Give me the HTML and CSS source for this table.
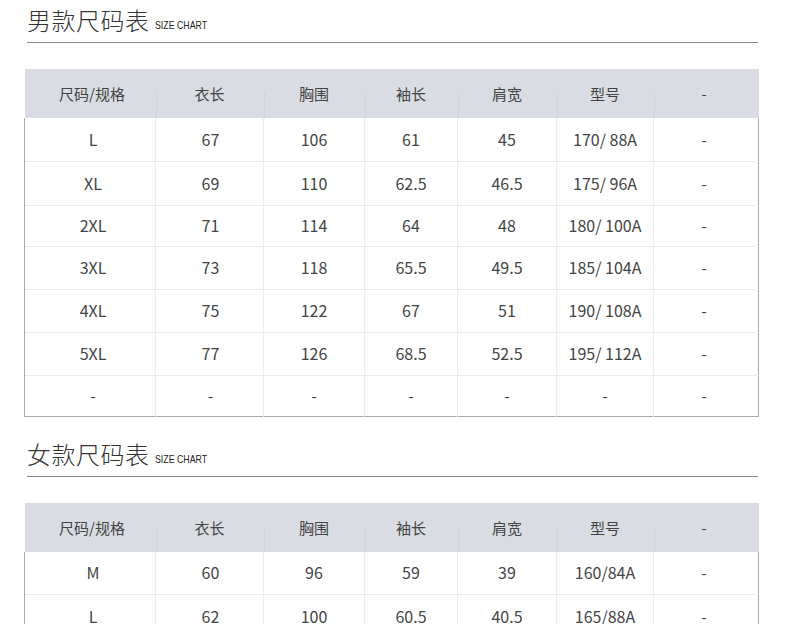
FILE: index.html
```html
<!DOCTYPE html>
<html lang="zh">
<head>
<meta charset="utf-8">
<title>尺码表</title>
<link rel="stylesheet" href="styles.css">
</head>
<body>
<section class="chart">
  <h2 class="chart-title"><span class="cn">男款尺码表</span><span class="en">SIZE CHART</span></h2>
  <table class="size-table">
    <thead>
      <tr><th>尺码/规格</th><th>衣长</th><th>胸围</th><th>袖长</th><th>肩宽</th><th>型号</th><th>-</th></tr>
    </thead>
    <tbody>
      <tr><td>L</td><td>67</td><td>106</td><td>61</td><td>45</td><td>170/ 88A</td><td>-</td></tr>
      <tr><td>XL</td><td>69</td><td>110</td><td>62.5</td><td>46.5</td><td>175/ 96A</td><td>-</td></tr>
      <tr><td>2XL</td><td>71</td><td>114</td><td>64</td><td>48</td><td>180/ 100A</td><td>-</td></tr>
      <tr><td>3XL</td><td>73</td><td>118</td><td>65.5</td><td>49.5</td><td>185/ 104A</td><td>-</td></tr>
      <tr><td>4XL</td><td>75</td><td>122</td><td>67</td><td>51</td><td>190/ 108A</td><td>-</td></tr>
      <tr><td>5XL</td><td>77</td><td>126</td><td>68.5</td><td>52.5</td><td>195/ 112A</td><td>-</td></tr>
      <tr><td>-</td><td>-</td><td>-</td><td>-</td><td>-</td><td>-</td><td>-</td></tr>
    </tbody>
  </table>
</section>
<section class="chart chart-second">
  <h2 class="chart-title"><span class="cn">女款尺码表</span><span class="en">SIZE CHART</span></h2>
  <table class="size-table">
    <thead>
      <tr><th>尺码/规格</th><th>衣长</th><th>胸围</th><th>袖长</th><th>肩宽</th><th>型号</th><th>-</th></tr>
    </thead>
    <tbody>
      <tr><td>M</td><td>60</td><td>96</td><td>59</td><td>39</td><td>160/84A</td><td>-</td></tr>
      <tr><td>L</td><td>62</td><td>100</td><td>60.5</td><td>40.5</td><td>165/88A</td><td>-</td></tr>
    </tbody>
  </table>
</section>
</body>
</html>
```
FILE: styles.css
```css
html, body {
  margin: 0;
  padding: 0;
  background: #fff;
}
body {
  font-family: "Noto Sans CJK SC", "Noto Sans", sans-serif;
  color: #333;
  width: 790px;
  height: 624px;
  overflow: hidden;
}
.chart {
  padding: 0 32px 0 24px;
}
.chart-second {
  margin-top: 17px;
}
.chart-title {
  margin: 0 0 0 3px;
  height: 43px;
  border-bottom: 1px solid #8a8a8a;
  display: flex;
  align-items: flex-end;
  font-weight: normal;
  box-sizing: border-box;
  padding-bottom: 7px;
}
.chart-title .cn {
  font-size: 24px;
  font-weight: 300;
  line-height: 30px;
  color: #333;
  letter-spacing: 0.5px;
}
.chart-title .en {
  font-family: "Liberation Sans", Arial, sans-serif;
  font-size: 11px;
  line-height: 12px;
  color: #222;
  margin-left: 5px;
  margin-bottom: 4px;
  display: inline-block;
  transform: scaleX(0.8);
  transform-origin: left bottom;
  white-space: nowrap;
}
.size-table {
  margin-top: 26px;
  width: 734px;
  border-collapse: collapse;
  table-layout: fixed;
  font-size: 15px;
  font-weight: 400;
  color: #444;
}
.size-table th:nth-child(1) { width: 131px; }
.size-table th:nth-child(2) { width: 108px; }
.size-table th:nth-child(3) { width: 101px; }
.size-table th:nth-child(4) { width: 93px; }
.size-table th:nth-child(5) { width: 99px; }
.size-table th:nth-child(6) { width: 97px; }
.size-table th:nth-child(7) { width: 105px; }
.size-table thead tr {
  background: #d9dde3;
  height: 49px;
}
.size-table th {
  font-weight: 400;
  color: #444;
  text-align: center;
  position: relative;
  padding: 0;
}
.size-table th:first-child {
  text-indent: 4px;
}
.size-table th:last-child {
  text-indent: -4px;
}
.size-table th + th::before {
  content: "";
  position: absolute;
  left: 0;
  top: 24px;
  bottom: 0;
  width: 1px;
  background: #cfd3d9;
}
.size-table tbody {
  border-left: 1px solid #a9a9a9;
  border-right: 1px solid #a9a9a9;
  border-bottom: 1px solid #a9a9a9;
}
.size-table tbody tr {
  height: 43px;
  border-top: 1px solid #ececec;
}
.size-table tbody tr:first-child {
  border-top: none;
}
.size-table tbody tr:nth-child(2) { height: 44px; }
.size-table tbody tr:nth-child(3) { height: 41px; }
.size-table tbody tr:nth-child(7) { height: 41px; }
.size-table td {
  text-align: center;
  padding: 0 0 1px;
  font-size: 16px;
  border-left: 1px solid #ececec;
}
.size-table td:first-child {
  border-left: 1px solid #a9a9a9;
  text-indent: 6px;
}
.size-table td:nth-child(2) {
  text-indent: 2px;
}
.size-table td:last-child {
  text-indent: -4px;
}
```
